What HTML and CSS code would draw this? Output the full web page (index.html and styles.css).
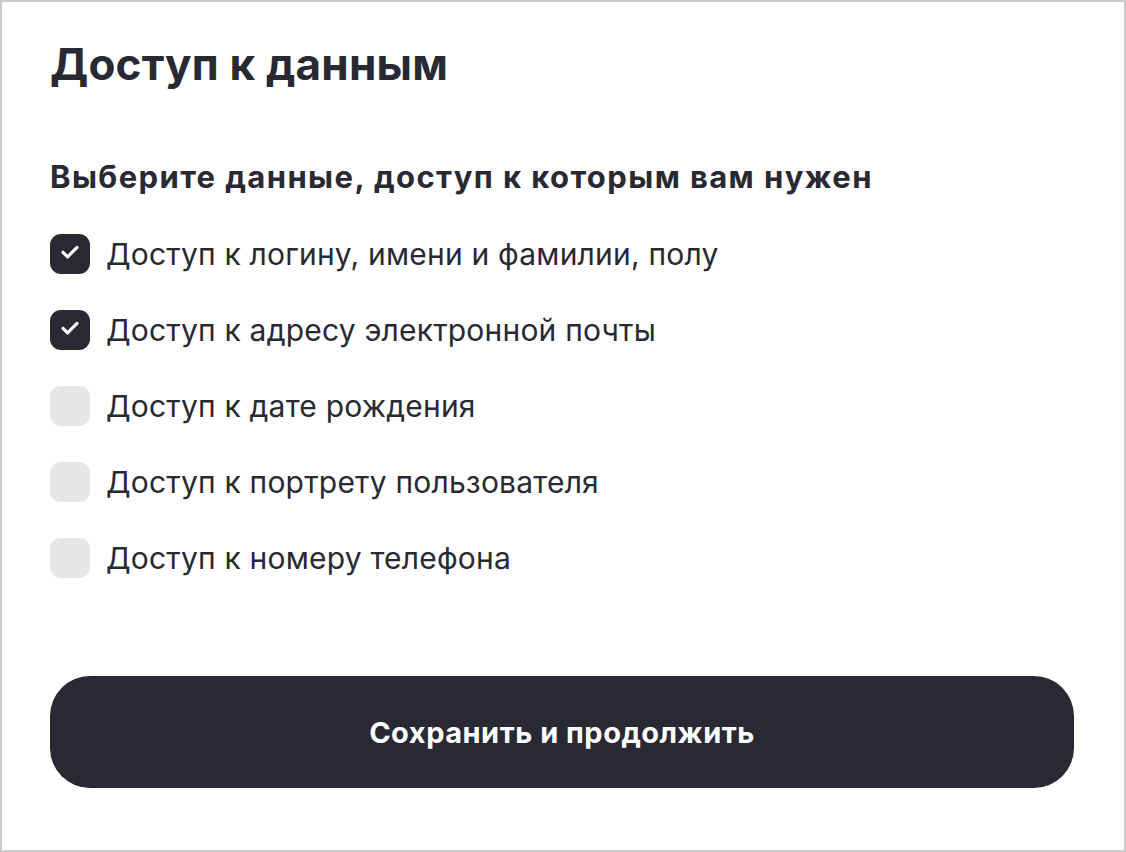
FILE: index.html
```html
<!DOCTYPE html>
<html>
<head>
    <title>Доступ к данным</title>
    <link rel="stylesheet" href="styles.css">
</head>
<body>
    <div class="frame">
        <h1 class="title">Доступ к данным</h1>

        <h2 class="subtitle">Выберите данные, доступ к которым вам нужен</h2>

        <div class="options">
            <label class="option">
                <span class="box checked">
                    <svg width="40" height="40" viewBox="0 0 40 40"><path d="M13 18.3l4.6 4.5L27 13.4" fill="none" stroke="#fff" stroke-width="3.2" stroke-linecap="round" stroke-linejoin="round"/></svg>
                </span>
                Доступ к логину, имени и фамилии, полу
            </label>
            <label class="option">
                <span class="box checked">
                    <svg width="40" height="40" viewBox="0 0 40 40"><path d="M13 18.3l4.6 4.5L27 13.4" fill="none" stroke="#fff" stroke-width="3.2" stroke-linecap="round" stroke-linejoin="round"/></svg>
                </span>
                Доступ к адресу электронной почты
            </label>
            <label class="option">
                <span class="box"></span>
                Доступ к дате рождения
            </label>
            <label class="option">
                <span class="box"></span>
                Доступ к портрету пользователя
            </label>
            <label class="option">
                <span class="box"></span>
                Доступ к номеру телефона
            </label>
        </div>

        <button class="submit">Сохранить и продолжить</button>
    </div>
</body>
</html>
```

FILE: styles.css
```css
html, body {
    margin: 0;
    padding: 0;
}
body {
    font-family: Inter, "Noto Sans", sans-serif;
    color: #292933;
    background: #fff;
}
.frame {
    box-sizing: border-box;
    width: 1126px;
    height: 852px;
    border: 2px solid #cccccc;
    padding: 34px 50px 0 48px;
    display: flex;
    flex-direction: column;
}
.title {
    margin: 0;
    font-size: 44px;
    line-height: 56px;
    font-weight: 700;
    letter-spacing: 0.2px;
}
.subtitle {
    margin: 65px 0 0;
    font-size: 31px;
    line-height: 40px;
    font-weight: 700;
    letter-spacing: 1.4px;
}
.options {
    margin-top: 37px;
    display: flex;
    flex-direction: column;
    gap: 36px;
}
.option {
    display: flex;
    align-items: center;
    gap: 16px;
    font-size: 30px;
    line-height: 40px;
    letter-spacing: 0.2px;
}
.box {
    width: 40px;
    height: 40px;
    border-radius: 11px;
    background: #e6e6e6;
    display: flex;
    align-items: center;
    justify-content: center;
    flex-shrink: 0;
}
.box.checked {
    background: #292933;
}
.submit {
    margin-top: 98px;
    height: 112px;
    border: none;
    border-radius: 40px;
    background: #292933;
    color: #fff;
    font-family: inherit;
    font-size: 29px;
    font-weight: 700;
    letter-spacing: 0.5px;
    cursor: pointer;
}
```
